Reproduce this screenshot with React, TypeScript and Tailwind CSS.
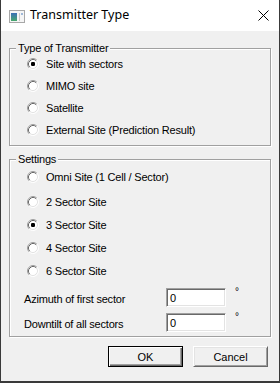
import React, { useState } from 'react';

const font = { fontFamily: '"Liberation Sans", Arial, sans-serif' };

function Radio({ checked }: { checked: boolean }) {
  return (
    <svg width="12" height="12" viewBox="0 0 12 12" className="shrink-0">
      <circle cx="6" cy="6" r="5" fill="#fff" />
      <path d="M9.89 2.11 A5.5 5.5 0 0 0 2.11 9.89" fill="none" stroke="#a0a0a0" strokeWidth="1" />
      <path d="M2.11 9.89 A5.5 5.5 0 0 0 9.89 2.11" fill="none" stroke="#ffffff" strokeWidth="1" />
      <path d="M9.18 2.82 A4.5 4.5 0 0 0 2.82 9.18" fill="none" stroke="#696969" strokeWidth="1" />
      <path d="M2.82 9.18 A4.5 4.5 0 0 0 9.18 2.82" fill="none" stroke="#e3e3e3" strokeWidth="1" />
      {checked && <rect x="4" y="4" width="4" height="4" rx="1.2" fill="#000" />}
    </svg>
  );
}

function Option({ label, checked, onClick, className = '' }: { label: string; checked: boolean; onClick: () => void; className?: string }) {
  return (
    <div onClick={onClick} className={`flex items-center cursor-default ${className}`}>
      <Radio checked={checked} />
      <span className="ml-[7px] text-[11px] leading-[14px] tracking-[-0.2px] text-black">{label}</span>
    </div>
  );
}

function Group({ title, className = '', children }: { title: string; className?: string; children: React.ReactNode }) {
  return (
    <fieldset className={`border border-[#a0a0a0] shadow-[inset_1px_1px_0_#fff,1px_1px_0_#fff] ${className}`}>
      <legend className="ml-[6px] px-[2px] bg-[#f0f0f0] text-[11px] leading-[14px] tracking-[-0.2px] text-black">{title}</legend>
      {children}
    </fieldset>
  );
}

function Field({ label, className = '' }: { label: string; className?: string }) {
  return (
    <div className={`flex items-start ${className}`}>
      <span className="w-[156px] pl-[14px] pt-[4px] text-[11px] leading-[14px] tracking-[-0.2px] text-black">{label}</span>
      <div className="w-[60px] h-[19px] bg-white border-t border-l border-[#a0a0a0] border-b border-r border-b-white border-r-white shadow-[inset_1px_1px_0_#696969,inset_-1px_-1px_0_#e3e3e3] pl-[3px] pt-[2px] text-[11px] leading-[14px] text-black">
        0
      </div>
      <span className="ml-[9px] -mt-[3px] text-[10px] leading-[14px] text-black">°</span>
    </div>
  );
}

export default function App() {
  const [type, setType] = useState('Site with sectors');
  const [sectors, setSectors] = useState('3 Sector Site');

  const types = ['Site with sectors', 'MIMO site', 'Satellite', 'External Site (Prediction Result)'];
  const settings = [
    { label: 'Omni Site (1 Cell / Sector)', cls: 'mt-[1px]' },
    { label: '2 Sector Site', cls: 'mt-[5px]' },
    { label: '3 Sector Site', cls: 'mt-[3px]' },
    { label: '4 Sector Site', cls: 'mt-[3px]' },
    { label: '6 Sector Site', cls: 'mt-[3px]' },
  ];

  return (
    <div style={font} className="w-[280px] h-[383px] flex flex-col bg-[#f0f0f0] border-x border-b-2 border-[#3a3a3a] overflow-hidden">
      {/* Title bar */}
      <div className="h-[31px] bg-white flex items-center shrink-0">
        <svg width="16" height="13" viewBox="0 0 16 13" className="ml-[8px] mt-[1px]">
          <defs>
            <linearGradient id="ico" x1="0" y1="0" x2="0" y2="1">
              <stop offset="0" stopColor="#3b6fb6" />
              <stop offset="1" stopColor="#46a86c" />
            </linearGradient>
          </defs>
          <rect x="0.5" y="0.5" width="15" height="12" fill="#f5f5f5" stroke="#a8a8a8" />
          <rect x="2" y="3" width="6" height="8" fill="url(#ico)" />
          <rect x="10" y="3" width="1" height="8" fill="#c8c8c8" />
          <rect x="12" y="3" width="2" height="2" fill="#9fb8d8" />
        </svg>
        <span className="ml-[5px] text-[12.5px] text-black" style={{ fontFamily: '"Noto Sans", "Open Sans", sans-serif' }}>
          Transmitter Type
        </span>
        <svg width="11" height="11" viewBox="0 0 11 11" className="ml-auto mr-[10px]">
          <path d="M0.5 0.5 L10.5 10.5 M10.5 0.5 L0.5 10.5" stroke="#000" strokeWidth="1" />
        </svg>
      </div>

      {/* Body */}
      <div className="flex-1 flex flex-col px-[8px]">
        <Group title="Type of Transmitter" className="mt-[10px] pb-[4px]">
          <div className="-mt-[2px] pl-[17px]">
            {types.map((t) => (
              <Option key={t} label={t} checked={type === t} onClick={() => setType(t)} className="h-[22px]" />
            ))}
          </div>
        </Group>

        <Group title="Settings" className="mt-[6px] pb-[4px]">
          <div className="pl-[17px]">
            {settings.map((s) => (
              <Option
                key={s.label}
                label={s.label}
                checked={sectors === s.label}
                onClick={() => setSectors(s.label)}
                className={`h-[20px] ${s.cls}`}
              />
            ))}
          </div>
          <Field label="Azimuth of first sector" className="mt-[7px]" />
          <Field label="Downtilt of all sectors" className="mt-[6px]" />
        </Group>

        <div className="flex justify-end gap-[10px] mt-[9px] pr-[3px]">
          <button className="w-[75px] h-[21px] bg-[#f0f0f0] border border-black shadow-[inset_1px_1px_0_#fff,inset_-1px_-1px_0_#696969,inset_-2px_-2px_0_#a0a0a0] text-[11px] leading-[14px] text-black">
            OK
          </button>
          <button className="w-[75px] h-[21px] bg-[#f0f0f0] border border-t-white border-l-white border-b-[#696969] border-r-[#696969] shadow-[inset_1px_1px_0_#e3e3e3,inset_-1px_-1px_0_#a0a0a0] text-[11px] leading-[14px] text-black">
            Cancel
          </button>
        </div>
      </div>
    </div>
  );
}
